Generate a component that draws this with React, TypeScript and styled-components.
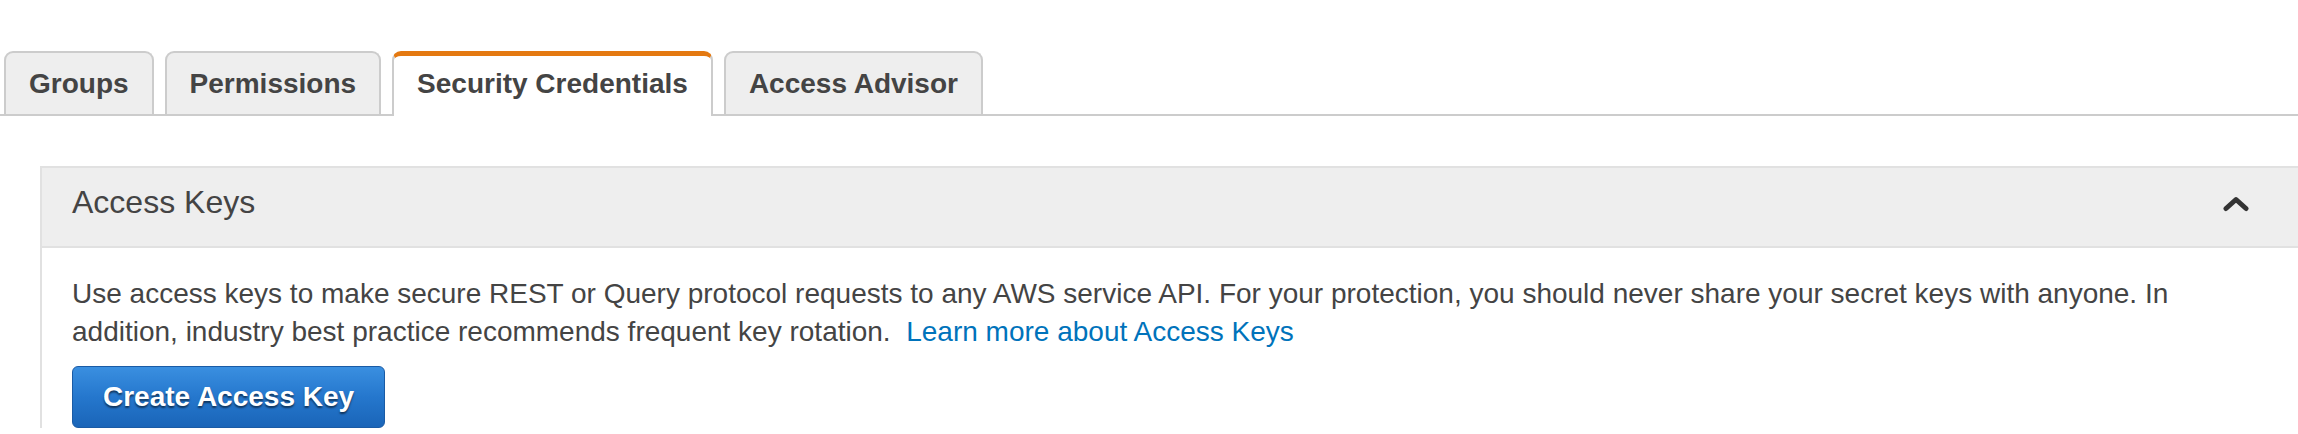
import React from 'react'
import styled, { createGlobalStyle } from 'styled-components'

const GlobalStyle = createGlobalStyle`
  html, body {
    margin: 0;
    padding: 0;
    background: #fff;
    overflow: hidden;
  }

  body {
    font-family: 'Liberation Sans', Arial, Helvetica, sans-serif;
    color: #444;
  }
`

const tabs = ['Groups', 'Permissions', 'Security Credentials', 'Access Advisor']

export default function App() {
  return (
    <Page>
      <GlobalStyle />
      <TabBar>
        {tabs.map(tab => (
          <Tab key={tab} $active={tab === 'Security Credentials'}>
            {tab}
          </Tab>
        ))}
      </TabBar>

      <Panel>
        <PanelHeader>
          <h2>Access Keys</h2>
          <Chevron width="28" height="16" viewBox="0 0 28 16">
            <polyline points="4,12.5 14,3.5 24,12.5" />
          </Chevron>
        </PanelHeader>
        <PanelBody>
          <p>
            Use access keys to make secure REST or Query protocol requests to
            any AWS service API. For your protection, you should never share
            your secret keys with anyone. In addition, industry best practice
            recommends frequent key rotation.{'\u00a0 '}
            <a href="#">Learn more about Access Keys</a>
          </p>
          <PrimaryButton>Create Access Key</PrimaryButton>
        </PanelBody>
      </Panel>
    </Page>
  )
}

const Page = styled.div`
  width: 100%;
  height: 434px;
  overflow: hidden;
  padding-top: 51px;
  box-sizing: border-box;
`

const TabBar = styled.div`
  display: flex;
  align-items: flex-end;
  gap: 11px;

  padding-left: 4px;

  border-bottom: 2px solid #cccccc;
`

const Tab = styled.div<{ $active?: boolean }>`
  box-sizing: border-box;

  padding: ${p => (p.$active ? '8px 23px 12px' : '11px 23px 10px')};
  margin-bottom: ${p => (p.$active ? '-2px' : '0')};

  font-size: 28px;
  font-weight: bold;
  line-height: 40px;
  color: #444;
  white-space: nowrap;

  background: ${p => (p.$active ? '#ffffff' : '#eeeeee')};

  border: 2px solid #cccccc;
  border-bottom: none;
  border-top: ${p => (p.$active ? '5px solid #e47911' : '2px solid #cccccc')};
  border-radius: 9px 9px 0 0;

  cursor: pointer;
`

const Panel = styled.section`
  margin: 50px -10px 0 40px;

  border: 2px solid #e1e1e1;
  border-bottom: none;
`

const PanelHeader = styled.div`
  display: flex;
  align-items: center;
  justify-content: space-between;

  height: 80px;
  box-sizing: border-box;
  padding: 0 56px 9px 30px;

  background: #eeeeee;
  border-bottom: 2px solid #e1e1e1;

  h2 {
    margin: 0;

    font-size: 32px;
    font-weight: normal;
    line-height: 37px;
    color: #444;
  }
`

const Chevron = styled.svg`
  margin-top: 2px;

  polyline {
    fill: none;
    stroke: #333;
    stroke-width: 5;
    stroke-linecap: round;
    stroke-linejoin: round;
  }
`

const PanelBody = styled.div`
  padding: 27px 56px 0 30px;

  p {
    margin: 0 0 15px;

    font-size: 28px;
    line-height: 38px;
    color: #444;
  }

  a {
    color: #0073bb;
    text-decoration: none;
  }
`

const PrimaryButton = styled.button`
  height: 62px;
  padding: 0 30px;

  font-family: 'Liberation Sans', Arial, Helvetica, sans-serif;
  font-size: 28px;
  font-weight: bold;
  color: #fff;
  text-shadow: 0 2px 2px rgba(0, 0, 0, 0.55);

  background: linear-gradient(to bottom, #3a8fe0 0%, #2577cd 50%, #1a65b8 100%);
  border: 1px solid #1a5ba5;
  border-radius: 6px;

  cursor: pointer;
`
